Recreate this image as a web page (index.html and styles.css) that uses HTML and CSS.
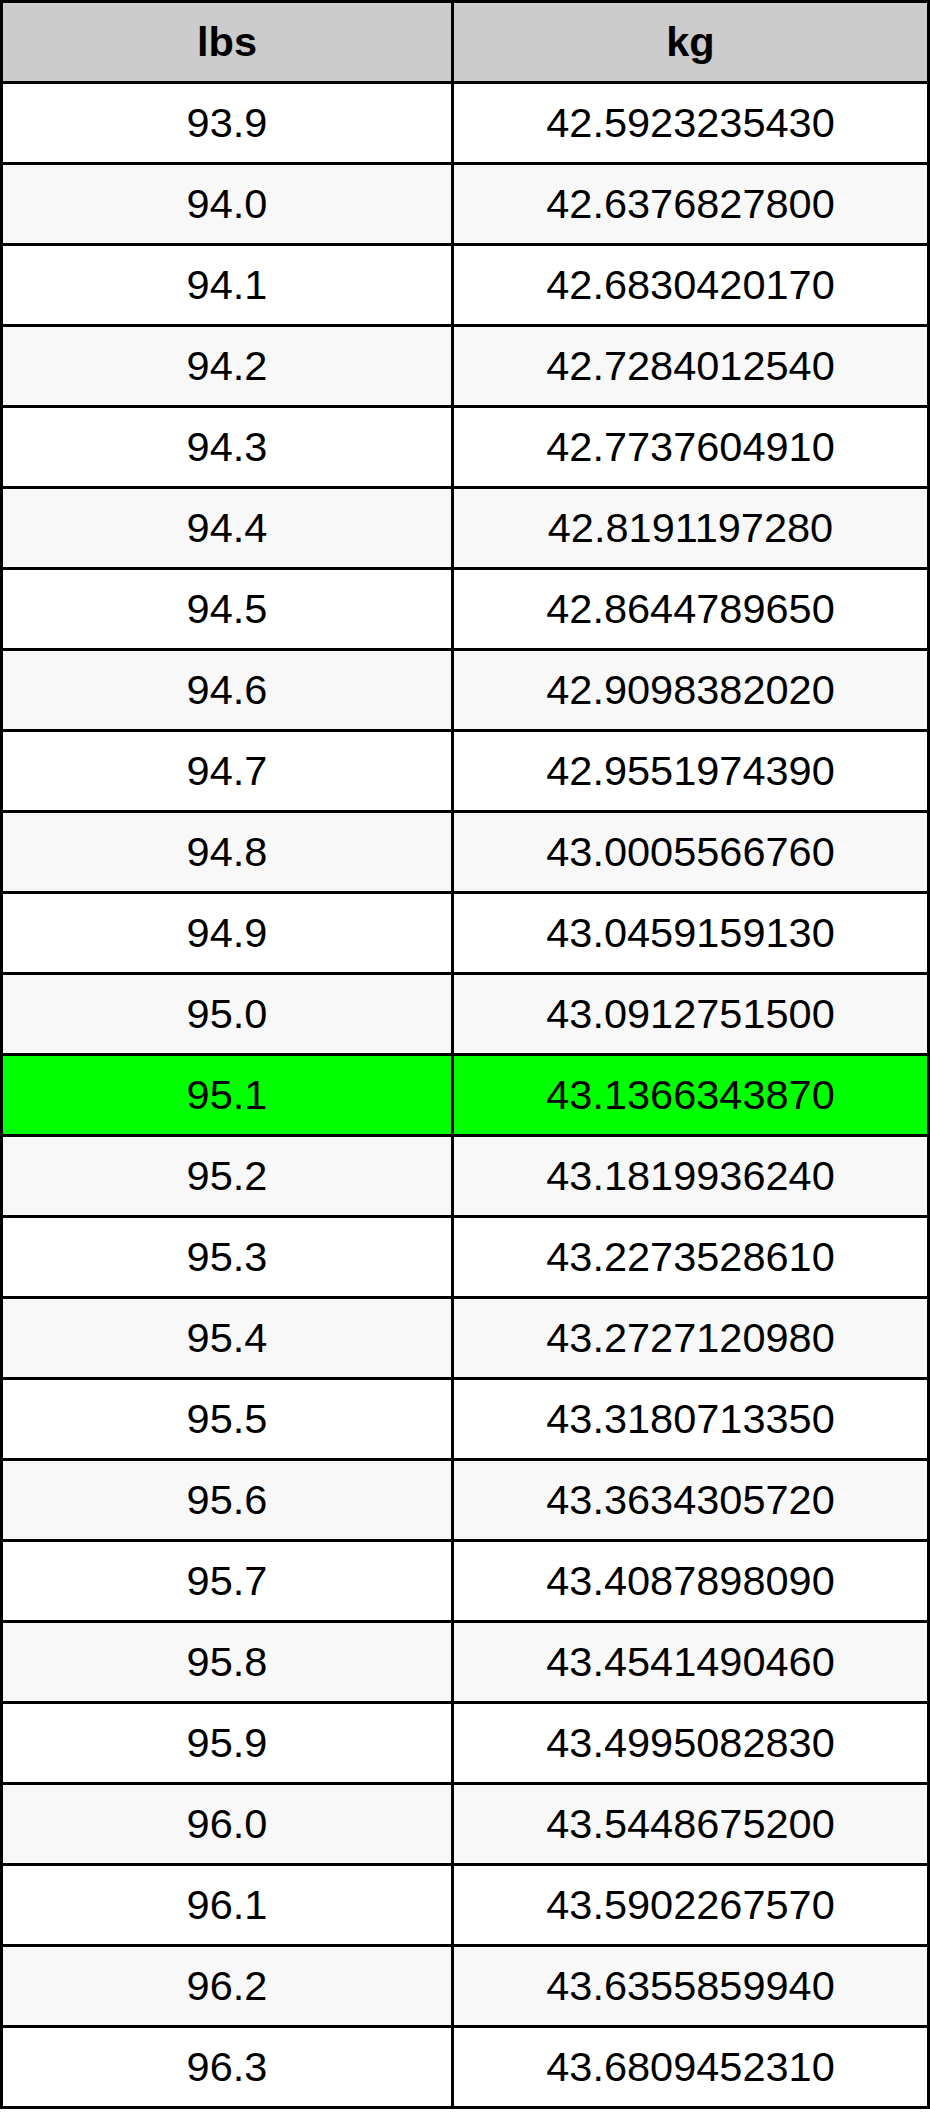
FILE: index.html
```html
<!DOCTYPE html>
<html lang="en">
<head>
<meta charset="utf-8">
<title>lbs to kg</title>
<link rel="stylesheet" href="styles.css">
</head>
<body>
<table class="conv">
  <colgroup>
    <col class="c-lbs">
    <col class="c-kg">
  </colgroup>
  <thead>
    <tr><th>lbs</th><th>kg</th></tr>
  </thead>
  <tbody>
    <tr><td>93.9</td><td>42.5923235430</td></tr>
    <tr><td>94.0</td><td>42.6376827800</td></tr>
    <tr><td>94.1</td><td>42.6830420170</td></tr>
    <tr><td>94.2</td><td>42.7284012540</td></tr>
    <tr><td>94.3</td><td>42.7737604910</td></tr>
    <tr><td>94.4</td><td>42.8191197280</td></tr>
    <tr><td>94.5</td><td>42.8644789650</td></tr>
    <tr><td>94.6</td><td>42.9098382020</td></tr>
    <tr><td>94.7</td><td>42.9551974390</td></tr>
    <tr><td>94.8</td><td>43.0005566760</td></tr>
    <tr><td>94.9</td><td>43.0459159130</td></tr>
    <tr><td>95.0</td><td>43.0912751500</td></tr>
    <tr class="hl"><td>95.1</td><td>43.1366343870</td></tr>
    <tr><td>95.2</td><td>43.1819936240</td></tr>
    <tr><td>95.3</td><td>43.2273528610</td></tr>
    <tr><td>95.4</td><td>43.2727120980</td></tr>
    <tr><td>95.5</td><td>43.3180713350</td></tr>
    <tr><td>95.6</td><td>43.3634305720</td></tr>
    <tr><td>95.7</td><td>43.4087898090</td></tr>
    <tr><td>95.8</td><td>43.4541490460</td></tr>
    <tr><td>95.9</td><td>43.4995082830</td></tr>
    <tr><td>96.0</td><td>43.5448675200</td></tr>
    <tr><td>96.1</td><td>43.5902267570</td></tr>
    <tr><td>96.2</td><td>43.6355859940</td></tr>
    <tr><td>96.3</td><td>43.6809452310</td></tr>
  </tbody>
</table>
</body>
</html>
```
FILE: styles.css
```css
html, body {
  margin: 0;
  padding: 0;
  background: #ffffff;
}

.conv {
  width: 930px;
  table-layout: fixed;
  border-collapse: separate;
  border-spacing: 3px;
  background: #000000;
  font-family: "Liberation Sans", Arial, Helvetica, sans-serif;
  font-size: 41.5px;
  color: #000000;
}

.c-lbs { width: 448px; }
.c-kg { width: 473px; }

.conv th,
.conv td {
  height: 78px;
  padding: 0;
  text-align: center;
  vertical-align: middle;
  background: #ffffff;
  line-height: normal;
}

.conv th {
  background: #cccccc;
  font-weight: bold;
}

.conv tbody tr:nth-child(even) td {
  background: #f8f8f8;
}

.conv tbody tr.hl td {
  background: #00ff00;
}
```
